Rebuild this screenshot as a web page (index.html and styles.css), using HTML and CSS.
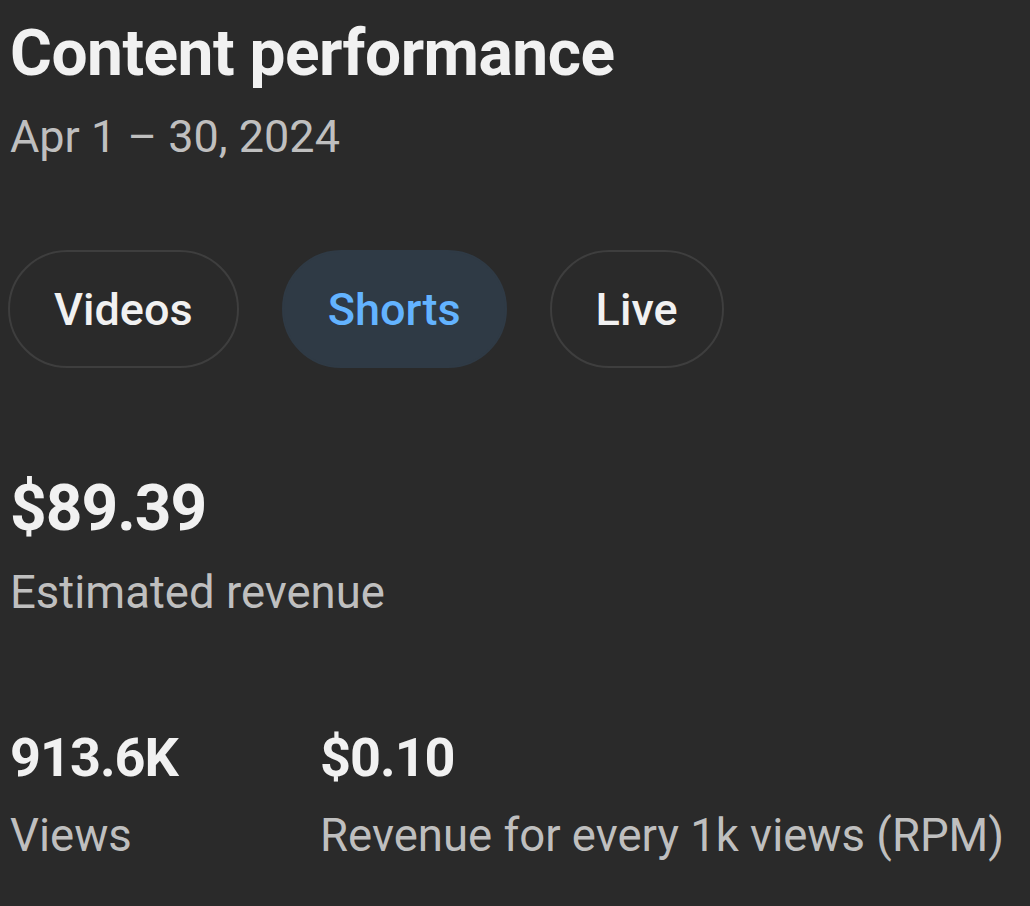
FILE: index.html
```html
<!DOCTYPE html>
<html lang="en">
<head>
<meta charset="utf-8">
<title>Content performance</title>
<link rel="stylesheet" href="styles.css">
</head>
<body>
<main class="card">
  <h1 class="title">Content performance</h1>
  <p class="date">Apr 1 – 30, 2024</p>
  <div class="chips">
    <button class="chip">Videos</button>
    <button class="chip chip-active">Shorts</button>
    <button class="chip">Live</button>
  </div>
  <section class="metric-main">
    <div class="value-lg">$89.39</div>
    <div class="label">Estimated revenue</div>
  </section>
  <section class="metric-row">
    <div class="metric">
      <div class="value-md">913.6K</div>
      <div class="label">Views</div>
    </div>
    <div class="metric">
      <div class="value-md">$0.10</div>
      <div class="label">Revenue for every 1k views (RPM)</div>
    </div>
  </section>
</main>
</body>
</html>
```
FILE: styles.css
```css
html, body {
  margin: 0;
  padding: 0;
  background: #2a2a2a;
}
body {
  width: 1030px;
  height: 906px;
  overflow: hidden;
  font-family: Roboto, "Liberation Sans", Arial, sans-serif;
  color: #f1f1f1;
}
.card {
  padding: 14px 0 0 10px;
}
.title {
  margin: 0;
  font-size: 64px;
  line-height: 80px;
  font-weight: 700;
  letter-spacing: -0.5px;
  color: #f1f1f1;
}
.date {
  margin: 15px 0 0;
  font-size: 45px;
  line-height: 56px;
  color: #bfbfbf;
}
.chips {
  display: flex;
  gap: 43px;
  margin: 85px 0 0 -2px;
}
.chip {
  height: 118px;
  padding: 0 44px;
  border: 2px solid #3e3e3e;
  border-radius: 59px;
  background: transparent;
  color: #f1f1f1;
  font-family: Roboto, "Liberation Sans", Arial, sans-serif;
  font-size: 45px;
  font-weight: 500;
}
.chip-active {
  background: #2f3a45;
  border-color: #2f3a45;
  color: #63b3ff;
}
.metric-main {
  margin-top: 101px;
}
.value-lg {
  font-size: 64px;
  line-height: 80px;
  font-weight: 700;
  letter-spacing: -1px;
}
.label {
  margin-top: 16px;
  font-size: 45.5px;
  line-height: 56px;
  color: #bfbfbf;
}
.metric-row {
  display: grid;
  grid-template-columns: 310px auto;
  margin-top: 103px;
}
.value-md {
  font-size: 54px;
  line-height: 68px;
  font-weight: 700;
  letter-spacing: -1px;
}
```
